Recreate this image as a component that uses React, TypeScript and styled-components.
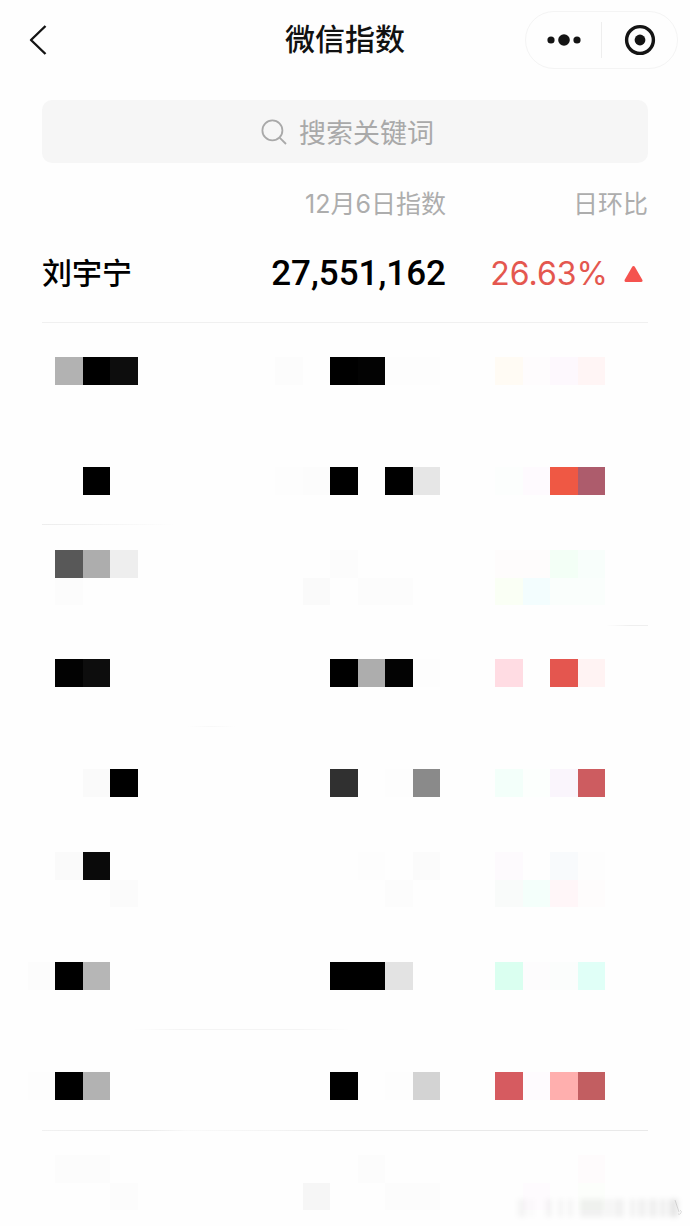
import React from "react";
import styled, { createGlobalStyle } from "styled-components";

const GlobalStyle = createGlobalStyle`
  * { box-sizing: border-box; }
  body {
    margin: 0;
    background: #fefefe;
    color: #000;
    font-family: Inter, "Noto Sans CJK SC", sans-serif;
  }
`;

const Page = styled.div`
  position: relative;
  overflow: hidden;
`;

const NavBar = styled.header`
  display: grid;
  grid-template-columns: 1fr auto 1fr;
  align-items: center;
  padding: 11px 12px 11px 22px;
`;

const Title = styled.h1`
  margin: 0;
  padding: 0 10px 2px 0;
  font-size: 30px;
  line-height: 44px;
  font-weight: 500;
  color: #111;
`;

const IconButton = styled.button`
  display: flex;
  align-items: center;
  justify-content: center;
  padding: 0;
  border: 0;
  background: none;
  color: #141414;
  cursor: pointer;
`;

const BackButton = styled(IconButton)`
  width: 32px;
  height: 44px;
`;

const Capsule = styled.div`
  justify-self: end;
  display: flex;
  align-items: center;
  width: 153px;
  height: 58px;
  border: 1px solid #f4f4f4;
  border-radius: 29px;
`;

const CapsuleButton = styled(IconButton)`
  flex: 1;
  height: 36px;

  & + & {
    border-left: 1px solid #eee;
  }
`;

const Main = styled.main`
  padding: 20px 42px 0;
`;

const SearchBox = styled.label`
  display: flex;
  align-items: center;
  justify-content: center;
  gap: 12px;
  height: 63px;
  padding-left: 6px;
  border-radius: 10px;
  background: #f6f6f6;
  color: #a9a9a9;
`;

const SearchInput = styled.input`
  width: 136px;
  padding: 4px 0 0;
  border: 0;
  outline: 0;
  background: none;
  font: inherit;
  font-size: 27px;
  line-height: 40px;
  color: #000;

  &::placeholder {
    color: #a9a9a9;
    opacity: 1;
  }
`;

const IndexTable = styled.table`
  width: 100%;
  border-collapse: collapse;
  table-layout: fixed;
`;

const HeadCell = styled.th`
  padding: 24px 0 0;
  font-size: 25px;
  line-height: 35px;
  font-weight: 400;
  text-align: right;
  color: #adadad;
`;

const Row = styled.tr<{ $line: string }>`
  background: ${(p) => p.$line} left bottom / 100% 1px no-repeat;
`;

const Cell = styled.td`
  height: 101px;
  padding: 2px 0 0;
  text-align: right;
  font-size: 32px;
  line-height: 44px;
  font-weight: 500;
  white-space: nowrap;
`;

const NameCell = styled(Cell)`
  padding: 0;
  text-align: left;
  font-size: 30px;
`;

const IndexCell = styled(Cell)`
  font-family: Roboto, sans-serif;
  font-size: 35px;
`;

const Change = styled.span`
  display: flex;
  align-items: center;
  justify-content: flex-end;
  gap: 16px;
  padding-right: 5px;
  font-weight: 400;
  color: #e4574f;
`;

const MaskedCell = styled.td<{ $top: number }>`
  height: 101px;
  padding: ${(p) => p.$top}px 0 0;
  vertical-align: top;

  tr:last-child > & {
    height: 95px;
  }
`;

/* The name block starts at the page edge, so it reaches out over the side padding. */
const tileBlocks = {
  name: { columns: 5, width: 138, margin: "0 0 0 -42px" },
  index: { columns: 6, width: 165, margin: "0 6px 0 auto" },
  change: { columns: 4, width: 110, margin: "0 43px 0 auto" },
};
type Block = keyof typeof tileBlocks;

const Tiles = styled.div<{ $block: Block }>`
  display: grid;
  grid-template-columns: repeat(${(p) => tileBlocks[p.$block].columns}, 1fr);
  grid-template-rows: repeat(2, 1fr);
  width: ${(p) => tileBlocks[p.$block].width}px;
  height: 55px;
  margin: ${(p) => tileBlocks[p.$block].margin};
`;

const Tile = styled.i<{ $color: string }>`
  background: ${(p) => p.$color};
`;

const Smudge = styled.svg`
  position: absolute;
  right: 4px;
  bottom: 2px;
`;

/* Each string lists tile colours from left to right, "-" for a clear tile. */
type MaskedRow = { top: number; line: string } & Record<Block, string>;

const FULL_LINE = "linear-gradient(#f0f0f0, #f0f0f0)";
const NO_LINE = "none";

const maskedRows: MaskedRow[] = [
  {
    top: 34,
    line: NO_LINE,
    name: "- - #b2b2b2 #000 #0d0d0d",
    index: "#fcfcfc - #000 #030303 #fdfdfd #fdfdfd",
    change: "#fffbf4 #fefcfd #fdf8fd #fff5f5",
  },
  {
    top: 43,
    line: "linear-gradient(90deg, #ededed, #f4f4f4 10%, transparent 22%)",
    name: "- - - #000 -",
    index: "#fdfdfd #fcfcfc #000 - #000 #e6e6e6",
    change: "#fcfefd #fefafe #ef5844 #ad5c6c",
  },
  {
    top: 25,
    line: "linear-gradient(90deg, transparent 93%, #efefef 97%)",
    name: "- - #585858 #adadad #eee - - #fcfcfc - -",
    index: "- - #fcfcfc - - - - #fafafa - #fcfcfc #fcfcfc -",
    change: "#fefcfc #fefcfc #f3fff6 #f8fefb #fafff5 #f3fdfe #fafefc #fafefc",
  },
  {
    top: 33,
    line: "linear-gradient(90deg, transparent 24%, #f8f8f8 28%, transparent 32%)",
    name: "- - #020202 #0d0d0d -",
    index: "- - #000 #adadad #030303 #fdfdfd",
    change: "#ffdce3 - #e4564f #fff3f3",
  },
  {
    top: 42,
    line: NO_LINE,
    name: "- - - #fafafa #000",
    index: "- - #303030 - #fdfdfd #8a8a8a",
    change: "#f3fffa #fcfffd #faf5fc #cd5c60",
  },
  {
    top: 24,
    line: NO_LINE,
    name: "- - #fafafa #0a0a0a - - - - - #fbfbfb",
    index: "- - - #fdfdfd - #fbfbfb - - - - #fcfcfc -",
    change: "#fdfafd - #f8fafc #fdfdfd #f9fbfa #f4fffb #fff6f8 #fefcfc",
  },
  {
    top: 33,
    line: "linear-gradient(90deg, transparent 15%, #f4f4f4 23%, #f4f4f4 42%, transparent 51%)",
    name: "- #fcfcfc #000 #b6b6b6 -",
    index: "- - #000 #000 #e3e3e3 -",
    change: "#dafff0 #fdfcfd #fbfdfc #e0fff7",
  },
  {
    top: 42,
    line: "linear-gradient(90deg, #f1f1f1, #e9e9e9 17%, #f9f9f9 24%, #f4f4f4 38%, #e9e9e9 50%)",
    name: "- #fdfdfd #000 #b2b2b2 -",
    index: "- - #000 - #fdfdfd #d3d3d3",
    change: "#d65b60 #fefbfe #ffafae #c25e61",
  },
  {
    top: 24,
    line: NO_LINE,
    name: "- - #fcfcfc #fcfcfc - - - - - #fcfcfc",
    index: "- - - #fcfcfc - - - #f6f6f6 - - #fcfcfc #fcfcfc",
    change: "- - - #fefbfc - #fefbfe - #fcfefb",
  },
];

function Mosaic({ block, colors }: { block: Block; colors: string }) {
  return (
    <Tiles $block={block} aria-hidden="true">
      {colors.split(" ").map((color, i) => (
        <Tile key={i} $color={color === "-" ? "transparent" : color} />
      ))}
    </Tiles>
  );
}

/* x, width and strength (percent) of each smeared bar */
const smudgeBars = [
  [6, 8, 4], [18, 4, 2], [34, 6, 4], [46, 5, 4], [56, 5, 4], [68, 24, 5], [94, 6, 4],
  [102, 10, 5], [118, 5, 5], [126, 8, 5], [137, 8, 6], [148, 6, 6], [157, 9, 9],
];

export default function App() {
  return (
    <Page>
      <GlobalStyle />
      <NavBar>
        <BackButton type="button" aria-label="返回">
          <svg width="20" height="32" viewBox="0 0 20 32" fill="none" stroke="currentColor" strokeWidth="2.4" strokeLinejoin="round">
            <path d="M17.5 2 L3 16 L17.5 30" />
          </svg>
        </BackButton>
        <Title>微信指数</Title>
        <Capsule>
          <CapsuleButton type="button" aria-label="更多">
            <svg width="34" height="14" viewBox="0 0 34 14" fill="currentColor">
              <circle cx="4" cy="7" r="3.6" />
              <circle cx="17" cy="7" r="5.8" />
              <circle cx="30" cy="7" r="3.6" />
            </svg>
          </CapsuleButton>
          <CapsuleButton type="button" aria-label="关闭">
            <svg width="32" height="32" viewBox="0 0 32 32" fill="none">
              <circle cx="16" cy="16" r="13.4" stroke="currentColor" strokeWidth="3.4" />
              <circle cx="16" cy="16" r="5.4" fill="currentColor" />
            </svg>
          </CapsuleButton>
        </Capsule>
      </NavBar>

      <Main>
        <SearchBox>
          <svg width="26" height="26" viewBox="0 0 26 26" fill="none" stroke="currentColor" strokeWidth="1.8">
            <circle cx="11.4" cy="11.4" r="10" />
            <path d="M18.6 18.6 L25 25" />
          </svg>
          <SearchInput type="text" placeholder="搜索关键词" aria-label="搜索关键词" />
        </SearchBox>

        <IndexTable>
          <thead>
            <tr>
              <HeadCell />
              <HeadCell scope="col">12月6日指数</HeadCell>
              <HeadCell scope="col">日环比</HeadCell>
            </tr>
          </thead>
          <tbody>
            <Row $line={FULL_LINE}>
              <NameCell>刘宇宁</NameCell>
              <IndexCell>27,551,162</IndexCell>
              <Cell>
                <Change>
                  26.63%
                  <svg width="19" height="18" viewBox="0 0 19 18" fill="#f5534f" stroke="#f5534f" strokeWidth="3" strokeLinejoin="round">
                    <path d="M9.5 2.5 L17 15.5 H2 Z" />
                  </svg>
                </Change>
              </Cell>
            </Row>
            {maskedRows.map((row, i) => (
              <Row key={i} $line={row.line}>
                <MaskedCell $top={row.top}>
                  <Mosaic block="name" colors={row.name} />
                </MaskedCell>
                <MaskedCell $top={row.top}>
                  <Mosaic block="index" colors={row.index} />
                </MaskedCell>
                <MaskedCell $top={row.top}>
                  <Mosaic block="change" colors={row.change} />
                </MaskedCell>
              </Row>
            ))}
          </tbody>
        </IndexTable>
      </Main>

      <Smudge width="174" height="34" viewBox="0 0 174 34" aria-hidden="true">
        <filter id="smudge-blur" x="-10%" y="-50%" width="120%" height="200%">
          <feGaussianBlur stdDeviation="2.4" />
        </filter>
        <g filter="url(#smudge-blur)">
          {smudgeBars.map(([x, width, strength]) => (
            <rect key={x} x={x} y="9" width={width} height="18" fill="#000" opacity={strength / 100} />
          ))}
        </g>
        <path d="M163 10 L167 22 M166 24 a2 2 0 1 0 2 -4" fill="none" stroke="#000" strokeOpacity="0.12" />
      </Smudge>
    </Page>
  );
}
